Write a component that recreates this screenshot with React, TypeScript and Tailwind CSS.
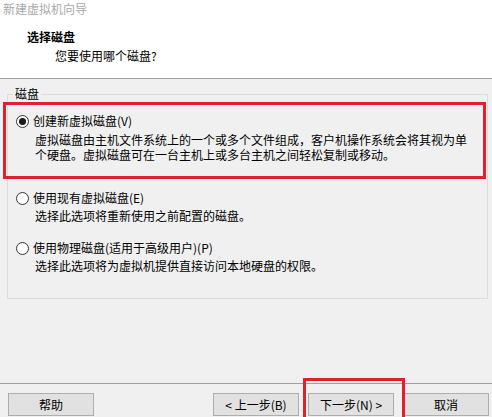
import React from "react";

function Radio({ checked }: { checked?: boolean }) {
  return (
    <span className="w-[13px] h-[13px] rounded-full border border-[#333333] bg-white flex items-center justify-center shrink-0">
      {checked && <span className="w-[7px] h-[7px] rounded-full bg-[#1a1a1a]" />}
    </span>
  );
}

function Btn({ children }: { children: React.ReactNode }) {
  return (
    <div className="w-[86px] h-[23px] bg-[#e1e1e1] border border-[#adadad] flex items-center justify-center leading-[16px]">
      {children}
    </div>
  );
}

export default function App() {
  return (
    <div
      className="w-[492px] h-[417px] bg-[#f0f0f0] flex flex-col relative overflow-hidden text-[12px] text-black"
      style={{ fontFamily: '"Noto Sans CJK SC", "Noto Sans", sans-serif' }}
    >
      <div className="bg-white h-[79px] border-b border-[#a0a0a0] shrink-0">
        <div className="text-[#a8a8a8] pl-[3px] pt-[1px] leading-[16px]">新建虚拟机向导</div>
        <div className="pl-[27px] mt-[12px] font-bold leading-[16px]">选择磁盘</div>
        <div className="pl-[55px] mt-[3px] leading-[16px]">您要使用哪个磁盘?</div>
      </div>

      <div className="flex-1">
        <fieldset className="ml-[7px] mr-[4px] mt-[7px] h-[213px] border border-[#dcdcdc] p-0">
          <legend className="ml-[5px] px-[2px] leading-[16px]">磁盘</legend>

          <div className="ml-[-5px] mr-[1px] h-[77px] border-[3px] border-[#e0202c] pl-[10px] pt-[8px]">
            <div className="flex items-center gap-[4px] leading-[16px]">
              <Radio checked />
              <span>创建新虚拟磁盘(V)</span>
            </div>
            <div className="pl-[19px] mt-[3px] leading-[15px]">
              <div>虚拟磁盘由主机文件系统上的一个或多个文件组成，客户机操作系统会将其视为单</div>
              <div>个硬盘。虚拟磁盘可在一台主机上或多台主机之间轻松复制或移动。</div>
            </div>
          </div>

          <div className="pl-[8px] mt-[11px]">
            <div className="flex items-center gap-[4px] leading-[16px]">
              <Radio />
              <span>使用现有虚拟磁盘(E)</span>
            </div>
            <div className="pl-[19px] mt-[2px] leading-[15px]">选择此选项将重新使用之前配置的磁盘。</div>
          </div>

          <div className="pl-[8px] mt-[17px]">
            <div className="flex items-center gap-[4px] leading-[16px]">
              <Radio />
              <span>使用物理磁盘(适用于高级用户)(P)</span>
            </div>
            <div className="pl-[19px] mt-[2px] leading-[15px]">选择此选项将为虚拟机提供直接访问本地硬盘的权限。</div>
          </div>
        </fieldset>
      </div>

      <div className="h-[34px] shrink-0 border-t border-[#a0a0a0] pt-[9px] pl-[8px] pr-[3px] flex items-start justify-between">
        <Btn>帮助</Btn>
        <div className="flex gap-[9px]">
          <Btn>&lt; 上一步(B)</Btn>
          <Btn>下一步(N) &gt;</Btn>
          <Btn>取消</Btn>
        </div>
      </div>

      <div className="absolute left-[303px] top-[378px] w-[102px] h-[45px] border-[3px] border-[#e0202c]" />
    </div>
  );
}
